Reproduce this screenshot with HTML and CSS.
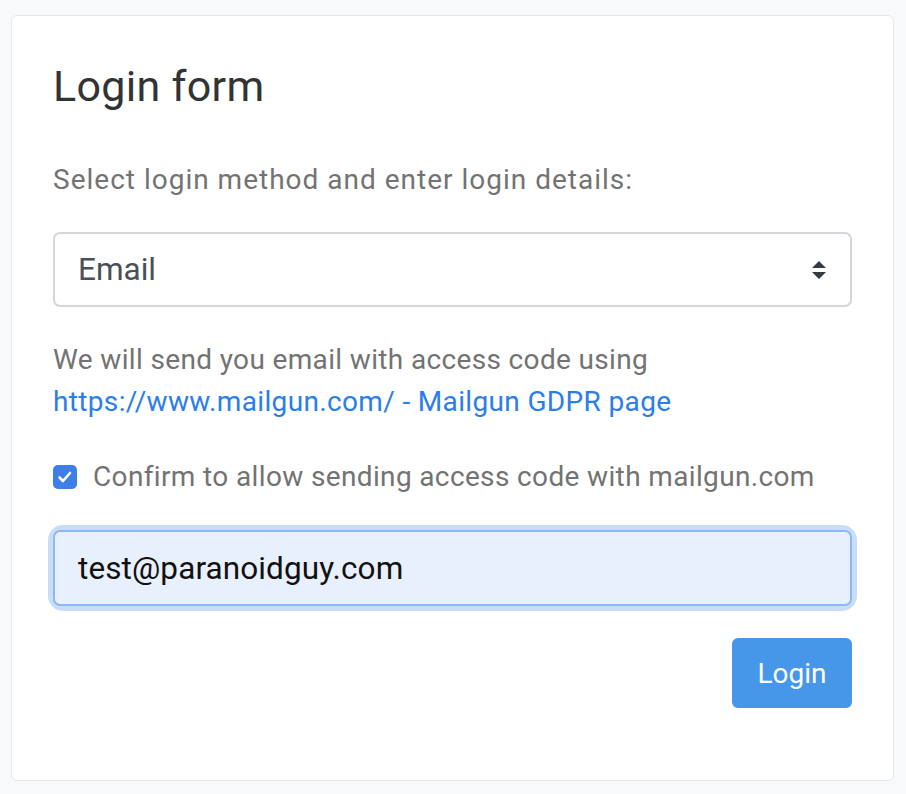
FILE: index.html
```html
<!DOCTYPE html>
<html>
<head>
<meta charset="utf-8">
<link rel="stylesheet" href="styles.css">
</head>
<body>
<div class="card">
  <h1 class="title">Login form</h1>
  <p class="lead">Select login method and enter login details:</p>
  <div class="select">
    <span>Email</span>
    <svg class="arrows" width="14" height="20" viewBox="0 0 14 20"><path d="M7 1 L14 8 H0 Z M7 19 L14 12 H0 Z" fill="#343a40"/></svg>
  </div>
  <p class="info">We will send you email with access code using<br><a href="#">https://www.mailgun.com/ - Mailgun GDPR page</a></p>
  <label class="check">
    <span class="box"><svg width="24" height="24" viewBox="0 0 24 24"><path d="M6.5 12.5 L10 16 L17 8" fill="none" stroke="#fff" stroke-width="2.6" stroke-linecap="round" stroke-linejoin="round"/></svg></span>
    <span>Confirm to allow sending access code with mailgun.com</span>
  </label>
  <div class="input-wrap"><div class="input">test@paranoidguy.com</div></div>
  <div class="actions"><button class="btn">Login</button></div>
</div>
</body>
</html>
```
FILE: styles.css
```css
html, body { margin: 0; padding: 0; }
body {
  background: #f8f9fb;
  font-family: Roboto, "Noto Sans", sans-serif;
  padding: 15px 12px 0 11px;
  height: 794px;
  box-sizing: border-box;
}
.card {
  background: #fff;
  border: 1px solid #e6e7e9;
  border-radius: 6px;
  height: 766px;
  box-sizing: border-box;
  padding: 43px 41px 0 41px;
}
.title {
  margin: 0;
  font-weight: 400;
  font-size: 43px;
  line-height: 54px;
  color: #333;
  letter-spacing: 0.3px;
}
.lead {
  margin: 50px 0 0 0;
  font-size: 28px;
  line-height: 34px;
  color: #737373;
  letter-spacing: 1px;
}
.select {
  margin-top: 35px;
  height: 75px;
  box-sizing: border-box;
  border: 2px solid #d3d6da;
  border-radius: 7px;
  display: flex;
  align-items: center;
  justify-content: space-between;
  padding: 0 24px 0 23px;
  font-size: 31.5px;
  color: #495057;
}
.info {
  margin: 32px 0 0 0;
  font-size: 28px;
  line-height: 42px;
  color: #737373;
  letter-spacing: 0.35px;
}
.info a { color: #2b7de9; text-decoration: none; }
.check {
  margin-top: 37px;
  display: flex;
  align-items: center;
  gap: 16px;
  font-size: 28px;
  color: #737373;
  line-height: 34px;
  letter-spacing: 0.36px;
}
.box {
  width: 24px;
  height: 24px;
  border-radius: 5px;
  background: #3d7fe6;
  display: flex;
  align-items: center;
  justify-content: center;
}
.input-wrap {
  margin-top: 36px;
  border-radius: 10px;
  box-shadow: 0 0 0 5px #c9ddf8;
}
.input {
  height: 76px;
  box-sizing: border-box;
  border: 2px solid #8db9f2;
  border-radius: 7px;
  background: #e8f0fd;
  display: flex;
  align-items: center;
  padding: 0 23px;
  font-size: 31.5px;
  color: #111;
  letter-spacing: 0.1px;
}
.actions {
  margin-top: 32px;
  display: flex;
  justify-content: flex-end;
}
.btn {
  width: 120px;
  height: 70px;
  border: none;
  border-radius: 6px;
  background: #4696ea;
  color: #fff;
  font-family: Roboto, sans-serif;
  font-size: 28px;
  padding: 0;
}
```
